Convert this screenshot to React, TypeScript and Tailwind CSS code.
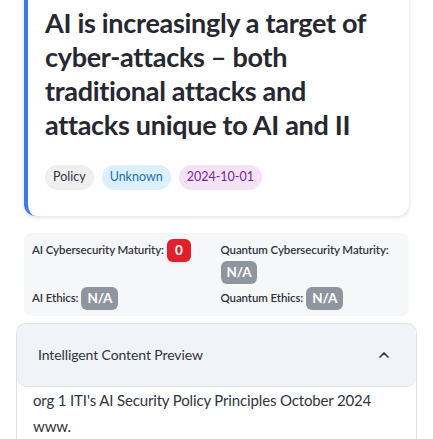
import { ChevronUp } from "lucide-react";

function Badge({ value, red }: { value: string; red?: boolean }) {
  return (
    <span
      className={`inline-flex h-[23px] min-w-[24px] items-center justify-center rounded-[6px] px-[6px] text-[13.5px] font-bold text-white ${
        red ? "bg-[#e0212b] shadow-sm" : "bg-[#8f959e]"
      }`}
    >
      {value}
    </span>
  );
}

function Metric({ label, value, red }: { label: string; value: string; red?: boolean }) {
  return (
    <div className="flex flex-wrap items-start gap-x-[3px] text-[11.5px] font-semibold leading-[22px] tracking-[-0.1px] text-[#31333f]">
      <span>{label}</span>
      <Badge value={value} red={red} />
    </div>
  );
}

export default function App() {
  const font = { fontFamily: "Lato, 'Noto Sans', sans-serif" };
  return (
    <div className="h-[439px] w-[433px] overflow-hidden bg-white" style={font}>
      <div className="px-[16px]">
        <div className="mx-[8px] -mt-[20px] rounded-[12px] border-l-[4px] border-[#3b7ae8] bg-white pb-[26px] pl-[17px] pr-[20px] pt-[26px] shadow-[0_1px_4px_rgba(0,0,0,0.15)]">
          <h1 className="text-[27px] font-bold leading-[34px] tracking-[-0.3px] text-[#262730]">
            AI is increasingly a target of cyber-attacks – both traditional attacks and attacks unique to AI and II
          </h1>
          <div className="mt-[23px] flex gap-[8px] text-[12.5px]">
            <span className="rounded-full bg-[#efefef] px-[8px] py-[3px] text-[#31333f]">Policy</span>
            <span className="rounded-full bg-[#dcf0fb] px-[8px] py-[3px] text-[#1d6fb0]">Unknown</span>
            <span className="rounded-full bg-[#f3e3f4] px-[8px] py-[3px] text-[#7b1fa2]">2024-10-01</span>
          </div>
        </div>

        <div className="mx-[8px] mt-[17px] grid grid-cols-2 gap-x-[8px] gap-y-[3px] rounded-[8px] bg-[#f6f7f9] px-[8px] pb-[6px] pt-[6px]">
          <Metric label="AI Cybersecurity Maturity:" value="0" red />
          <Metric label="Quantum Cybersecurity Maturity:" value="N/A" />
          <Metric label="AI Ethics:" value="N/A" />
          <Metric label="Quantum Ethics:" value="N/A" />
        </div>

        <div className="mt-[7px] rounded-t-[10px] border border-b-0 border-[#dde2e8]">
          <div className="flex h-[63px] items-center justify-between rounded-[10px] border-b border-[#dde2e8] bg-[#f0f4f8] pl-[21px] pr-[24px]">
            <span className="text-[14px] tracking-[-0.1px] text-[#31333f]">Intelligent Content Preview</span>
            <ChevronUp size={16} strokeWidth={2.5} className="text-[#31333f]" />
          </div>
          <div className="px-[16px] text-[15px] leading-[26px] tracking-[-0.15px] text-[#31333f]">
            <p>org 1 ITI's AI Security Policy Principles October 2024</p>
            <p>www.</p>
          </div>
        </div>
      </div>
    </div>
  );
}
